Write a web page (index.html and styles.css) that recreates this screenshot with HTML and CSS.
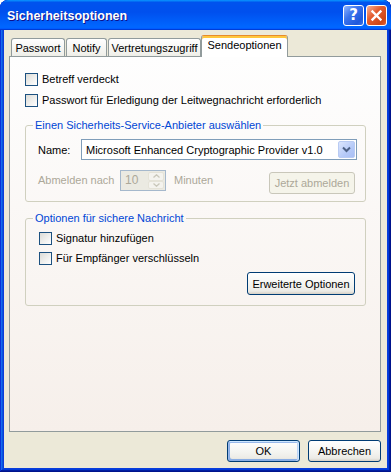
FILE: index.html
```html
<!DOCTYPE html>
<html lang="de">
<head>
    <meta charset="UTF-8">
    <title>Sicherheitsoptionen</title>
    <link rel="stylesheet" href="styles.css">
</head>
<body>
    <div class="window">
        <div class="titlebar">
            <span class="title">Sicherheitsoptionen</span>
            <div class="title-buttons">
                <span class="tb-btn help">?</span>
                <span class="tb-btn close">
                    <svg width="19" height="19" viewBox="0 0 19 19">
                        <path d="M5.5 5.5 L13.5 13.5 M13.5 5.5 L5.5 13.5" stroke="#fff" stroke-width="2.4" stroke-linecap="square"/>
                    </svg>
                </span>
            </div>
        </div>

        <div class="client">
            <div class="tabs">
                <span class="tab tab-pw">Passwort</span>
                <span class="tab tab-notify">Notify</span>
                <span class="tab tab-vertr">Vertretungszugriff</span>
                <span class="tab tab-active">Sendeoptionen</span>
            </div>

            <div class="page">
                <label class="check"><span class="box"></span>Betreff verdeckt</label>
                <label class="check check-next"><span class="box"></span>Passwort für Erledigung der Leitwegnachricht erforderlich</label>

                <fieldset class="group group-provider">
                    <legend>Einen Sicherheits-Service-Anbieter auswählen</legend>
                    <div class="row">
                        <span class="lbl lbl-name">Name:</span>
                        <div class="combo">
                            <span class="combo-text">Microsoft Enhanced Cryptographic Provider v1.0</span>
                            <span class="combo-btn">
                                <svg width="9" height="7" viewBox="0 0 9 7">
                                    <path d="M1 1.5 L4.5 5 L8 1.5" fill="none" stroke="#4D6185" stroke-width="2"/>
                                </svg>
                            </span>
                        </div>
                    </div>
                    <div class="row row-logout">
                        <span class="lbl lbl-abm disabled">Abmelden nach</span>
                        <div class="spin">
                            <span class="spin-text">10</span>
                            <span class="spin-btns">
                                <span class="spin-btn">
                                    <svg width="7" height="4" viewBox="0 0 7 4"><path d="M0.5 3.5 L3.5 0.8 L6.5 3.5" fill="none" stroke="#C9C7BA" stroke-width="1.3"/></svg>
                                </span>
                                <span class="spin-btn">
                                    <svg width="7" height="4" viewBox="0 0 7 4"><path d="M0.5 0.5 L3.5 3.2 L6.5 0.5" fill="none" stroke="#C9C7BA" stroke-width="1.3"/></svg>
                                </span>
                            </span>
                        </div>
                        <span class="minutes disabled">Minuten</span>
                        <span class="btn btn-disabled btn-logout">Jetzt abmelden</span>
                    </div>
                </fieldset>

                <fieldset class="group group-message">
                    <legend>Optionen für sichere Nachricht</legend>
                    <label class="check"><span class="box"></span>Signatur hinzufügen</label>
                    <label class="check check-next-sm"><span class="box"></span>Für Empfänger verschlüsseln</label>
                    <div class="adv-row">
                        <span class="btn btn-adv">Erweiterte Optionen</span>
                    </div>
                </fieldset>
            </div>

            <div class="footer">
                <span class="btn btn-footer btn-default">OK</span>
                <span class="btn btn-footer">Abbrechen</span>
            </div>
        </div>
    </div>
</body>
</html>
```

FILE: styles.css
```css
html, body {
    margin: 0;
    background: #fff;
}

body {
    font-family: "Liberation Sans", Arial, sans-serif;
    font-size: 11px;
    color: #000;
}

.window {
    width: 391px;
    height: 472px;
    display: flex;
    flex-direction: column;
    background: #0A3DDB;
    border-radius: 8px 8px 0 0;
    overflow: hidden;
    box-shadow: inset -1px -1px #00138c, inset 1px 1px #0831d9,
                inset -2px -2px #001ea0, inset 2px 2px #166aee,
                inset -3px -3px #003bda, inset 3px 3px #0855dd;
}

/* title bar */
.titlebar {
    height: 30px;
    flex: none;
    display: flex;
    align-items: center;
    padding: 0 4px 0 7px;
    border-radius: 8px 8px 0 0;
    background: linear-gradient(180deg, #0997ff, #0053ee 8%, #0050ee 40%, #0066ff 88%, #0066ff 93%, #005bff 95%, #003dd7 96%, #003dd7);
}

.title {
    color: #fff;
    font-weight: bold;
    font-size: 12.5px;
    text-shadow: 1px 1px #0f1089;
    padding-top: 1px;
}

.title-buttons {
    margin-left: auto;
    display: flex;
    gap: 2px;
    padding-top: 1px;
}

.tb-btn {
    width: 21px;
    height: 21px;
    box-sizing: border-box;
    border: 1px solid #fff;
    border-radius: 3px;
    display: flex;
    align-items: center;
    justify-content: center;
}

.help {
    background: linear-gradient(135deg, #8fb4ff, #3a73ec 40%, #1f58dc 80%, #3d74e6);
    color: #fff;
    font-family: "DejaVu Sans", sans-serif;
    font-weight: bold;
    font-size: 15px;
    line-height: 19px;
}

.close {
    background: linear-gradient(135deg, #f6b197, #e45d30 40%, #cf4616 80%, #e0643a);
}

/* client area */
.client {
    flex: 1;
    margin: 0 4px 4px;
    background: #ECE9D8;
    padding: 5px 6px 0 5px;
}

.tabs {
    height: 21px;
    display: flex;
    align-items: flex-end;
    padding-left: 2px;
}

.tab {
    height: 18px;
    box-sizing: border-box;
    border: 1px solid #919B9C;
    border-bottom: none;
    border-radius: 3px 3px 0 0;
    background: linear-gradient(#fff, #fafaf9 26%, #f0f0ea 95%, #ecebe5);
    text-align: center;
    line-height: 18px;
    margin-right: 1px;
}

.tab-pw { width: 54px; }
.tab-notify { width: 41px; }
.tab-vertr { width: 93px; margin-right: 0; }

.tab-active {
    width: 87px;
    height: 22px;
    margin-bottom: -1px;
    position: relative;
    z-index: 1;
    background: #fff;
    border-top: 1px solid #E68B2C;
    box-shadow: inset 0 2px #FFC73C;
    line-height: 19px;
}

.page {
    height: 376px;
    box-sizing: border-box;
    border: 1px solid #919B9C;
    background: linear-gradient(#FEFEFE, #F6EFEA);
    padding: 16px 14px 0 15px;
}

/* checkboxes */
.check {
    display: flex;
    align-items: center;
    gap: 4px;
    height: 13px;
    line-height: 13px;
}

.check-next { margin-top: 8px; }
.check-next-sm { margin-top: 7px; }

.box {
    width: 13px;
    height: 13px;
    flex: none;
    box-sizing: border-box;
    border: 1px solid #1C5180;
    background: linear-gradient(135deg, #DCDCD7, #fff);
}

/* group boxes */
.group {
    margin: 0;
    border: 1px solid #D0D0BF;
    border-radius: 3px;
    min-width: 0;
}

.group legend {
    padding: 0 2px;
    line-height: 14px;
    color: #0046D5;
}

.group-provider {
    margin-top: 11px;
    padding: 7px 8px 7px 12px;
}

.group-provider legend { margin-left: -5px; }

.group-message {
    margin-top: 9px;
    padding: 7px 10px 10px 13px;
}

.group-message legend { margin-left: -6px; }

.row {
    display: flex;
    align-items: center;
}

.row-logout {
    margin-top: 10px;
    align-items: flex-start;
    padding-right: 2px;
}

.lbl-name { width: 43px; }

.lbl-abm {
    width: 82px;
    line-height: 21px;
}

.disabled { color: #ACA899; }

.combo {
    width: 276px;
    height: 21px;
    box-sizing: border-box;
    border: 1px solid #7F9DB9;
    background: #fff;
    display: flex;
    align-items: center;
    padding: 1px 1px 1px 4px;
}

.combo-text {
    flex: 1;
}

.combo-btn {
    width: 17px;
    height: 17px;
    box-sizing: border-box;
    border: 1px solid #B9CBF3;
    border-radius: 2px;
    background: linear-gradient(135deg, #DCE6FD, #B6CAF8 60%, #A9BFF5);
    display: flex;
    align-items: center;
    justify-content: center;
}

.spin {
    width: 46px;
    height: 21px;
    box-sizing: border-box;
    border: 1px solid #A5B8CC;
    background: #EBEAE2;
    display: flex;
    padding: 1px;
}

.spin-text {
    flex: 1;
    color: #ACA899;
    padding-left: 3px;
    line-height: 17px;
    font-size: 12px;
}

.spin-btns {
    width: 16px;
    display: flex;
    flex-direction: column;
}

.spin-btn {
    flex: 1;
    border: 1px solid #E5E3D8;
    border-radius: 2px;
    background: #F4F3EE;
    display: flex;
    align-items: center;
    justify-content: center;
}

.minutes {
    margin-left: 8px;
    line-height: 21px;
}

/* buttons */
.btn {
    box-sizing: border-box;
    border: 1px solid #003C74;
    border-radius: 3px;
    background: linear-gradient(180deg, #fff, #f3f3ef 60%, #ECEBE6 86%, #D6D0C5);
    display: flex;
    align-items: center;
    justify-content: center;
}

.btn-disabled {
    border-color: #C9C7BA;
    background: #F5F4EA;
    color: #ACA899;
}

.btn-logout {
    margin-left: auto;
    margin-top: 2px;
    width: 86px;
    height: 22px;
}

.adv-row {
    display: flex;
    justify-content: flex-end;
    margin-top: 7px;
}

.btn-adv {
    width: 108px;
    height: 23px;
}

.footer {
    display: flex;
    justify-content: flex-end;
    gap: 8px;
    margin-top: 8px;
}

.btn-footer {
    width: 73px;
    height: 22px;
}

.btn-default {
    box-shadow: inset -1px 1px #CEE7FF, inset 1px 2px #98B8EA,
                inset -2px 0 #BCD4F6, inset 1px -1px #89ADE4, inset 2px -2px #89ADE4;
}
```
